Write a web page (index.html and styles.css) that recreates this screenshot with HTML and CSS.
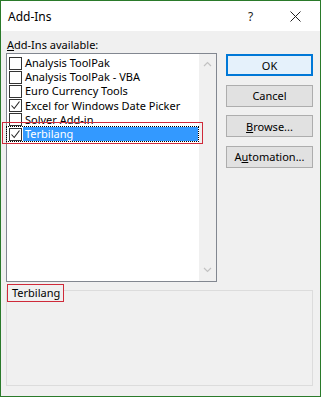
FILE: index.html
```html
<!DOCTYPE html>
<html>
<head>
<meta charset="utf-8">
<link rel="stylesheet" href="styles.css">
</head>
<body>
<div class="window">
  <div class="titlebar">
    <span class="title">Add-Ins</span>
    <span class="help">?</span>
    <span class="close"><svg width="11" height="11" viewBox="0 0 11 11"><path d="M0.5 0.5 L10.5 10.5 M10.5 0.5 L0.5 10.5" stroke="#222" stroke-width="1" fill="none"/></svg></span>
  </div>
  <div class="content">
    <div class="top">
      <div class="leftcol">
        <div class="label"><u>A</u>dd-Ins available:</div>
        <div class="listbox">
          <div class="items">
            <div class="item"><span class="cb"></span><span class="txt">Analysis ToolPak</span></div>
            <div class="item"><span class="cb"></span><span class="txt">Analysis ToolPak - VBA</span></div>
            <div class="item"><span class="cb"></span><span class="txt">Euro Currency Tools</span></div>
            <div class="item"><span class="cb"><svg width="11" height="11" viewBox="0 0 11 11"><path d="M1.5 5.5 L4.2 8.5 L9.5 1.5" stroke="#222" stroke-width="1.1" fill="none"/></svg></span><span class="txt">Excel for Windows Date Picker</span></div>
            <div class="item"><span class="cb"></span><span class="txt">Solver Add-in</span></div>
            <div class="item selected"><span class="cb"><svg width="11" height="11" viewBox="0 0 11 11"><path d="M1.5 5.5 L4.2 8.5 L9.5 1.5" stroke="#222" stroke-width="1.1" fill="none"/></svg></span><span class="txt">Terbilang</span></div>
          </div>
          <div class="scrollbar">
            <svg class="arrow" width="9" height="6" viewBox="0 0 9 6"><path d="M1 5 L4.5 1.5 L8 5" stroke="#c2c2c2" stroke-width="1.2" fill="none"/></svg>
            <svg class="arrow" width="9" height="6" viewBox="0 0 9 6"><path d="M1 1 L4.5 4.5 L8 1" stroke="#c2c2c2" stroke-width="1.2" fill="none"/></svg>
          </div>
          <div class="redmark rowmark"></div>
        </div>
      </div>
      <div class="buttons">
        <div class="btn default">OK</div>
        <div class="btn">Cancel</div>
        <div class="btn"><u>B</u>rowse...</div>
        <div class="btn">A<u>u</u>tomation...</div>
      </div>
    </div>
    <div class="group">
      <div class="grouplabel">Terbilang</div>
    </div>
  </div>
</div>
</body>
</html>
```
FILE: styles.css
```css
* { box-sizing: border-box; }
html, body { margin: 0; padding: 0; background: #f0f0f0; }
body {
  font-family: "Segoe UI", "Noto Sans", "Liberation Sans", sans-serif;
  font-size: 11px;
  color: #000;
}
.window {
  width: 321px;
  height: 397px;
  border: 1px solid #2a7a2a;
  background: #f0f0f0;
  display: flex;
  flex-direction: column;
}
.titlebar {
  height: 30px;
  background: #fff;
  display: flex;
  align-items: center;
  padding-left: 7px;
  flex: none;
}
.title { font-size: 12px; flex: 1; }
.help { width: 12px; margin-right: 30px; font-size: 12px; color: #222; }
.close { width: 11px; height: 11px; margin-right: 19px; display: flex; }
.content {
  padding: 6px 0 0 5px;
  display: flex;
  flex-direction: column;
}
.top { display: flex; gap: 9px; }
.leftcol { width: 211px; display: flex; flex-direction: column; }
.label { height: 16px; line-height: 16px; padding-left: 1px; }
.listbox {
  position: relative;
  height: 229px;
  border: 1px solid #828790;
  background: #fff;
  display: flex;
}
.items { flex: 1; padding-top: 2px; }
.item {
  height: 14.2px;
  display: flex;
  align-items: center;
  padding-left: 2px;
}
.cb {
  width: 13px;
  height: 13px;
  border: 1px solid #333;
  background: #fff;
  display: flex;
  align-items: center;
  justify-content: center;
  flex: none;
}
.txt {
  padding-left: 3px;
  line-height: 14px;
  white-space: nowrap;
}
.item.selected {
  outline: 1px dotted #000;
  outline-offset: 0;
  margin-right: 1px;
}
.item.selected .txt {
  margin-left: 1px;
  padding-left: 2px;
  flex: 1;
  background: #3399ff;
  color: #fff;
  height: 14px;
}
.scrollbar {
  width: 17px;
  background: #f0f0f0;
  display: flex;
  flex-direction: column;
  justify-content: space-between;
  align-items: center;
  padding: 7px 0 8px;
}
.redmark {
  position: absolute;
  border: 1px solid #cf2a3a;
}
.rowmark { left: -5px; top: 68px; width: 201px; height: 22px; }
.buttons {
  width: 87px;
  padding-top: 17px;
  display: flex;
  flex-direction: column;
  gap: 8.5px;
}
.btn {
  height: 22px;
  border: 1px solid #adadad;
  background: #e1e1e1;
  display: flex;
  align-items: center;
  justify-content: center;
}
.btn.default {
  border: 2px solid #0078d7;
  background: #e5f1fb;
}
.group {
  position: relative;
  margin-top: 8px;
  width: 307px;
  height: 96px;
  border: 1px solid #dcdcdc;
}
.grouplabel {
  position: absolute;
  left: 0;
  top: -7px;
  padding: 0 3px 0 4px;
  line-height: 16px;
  background: #f0f0f0;
  border: 1px solid #cf2a3a;
}
```
